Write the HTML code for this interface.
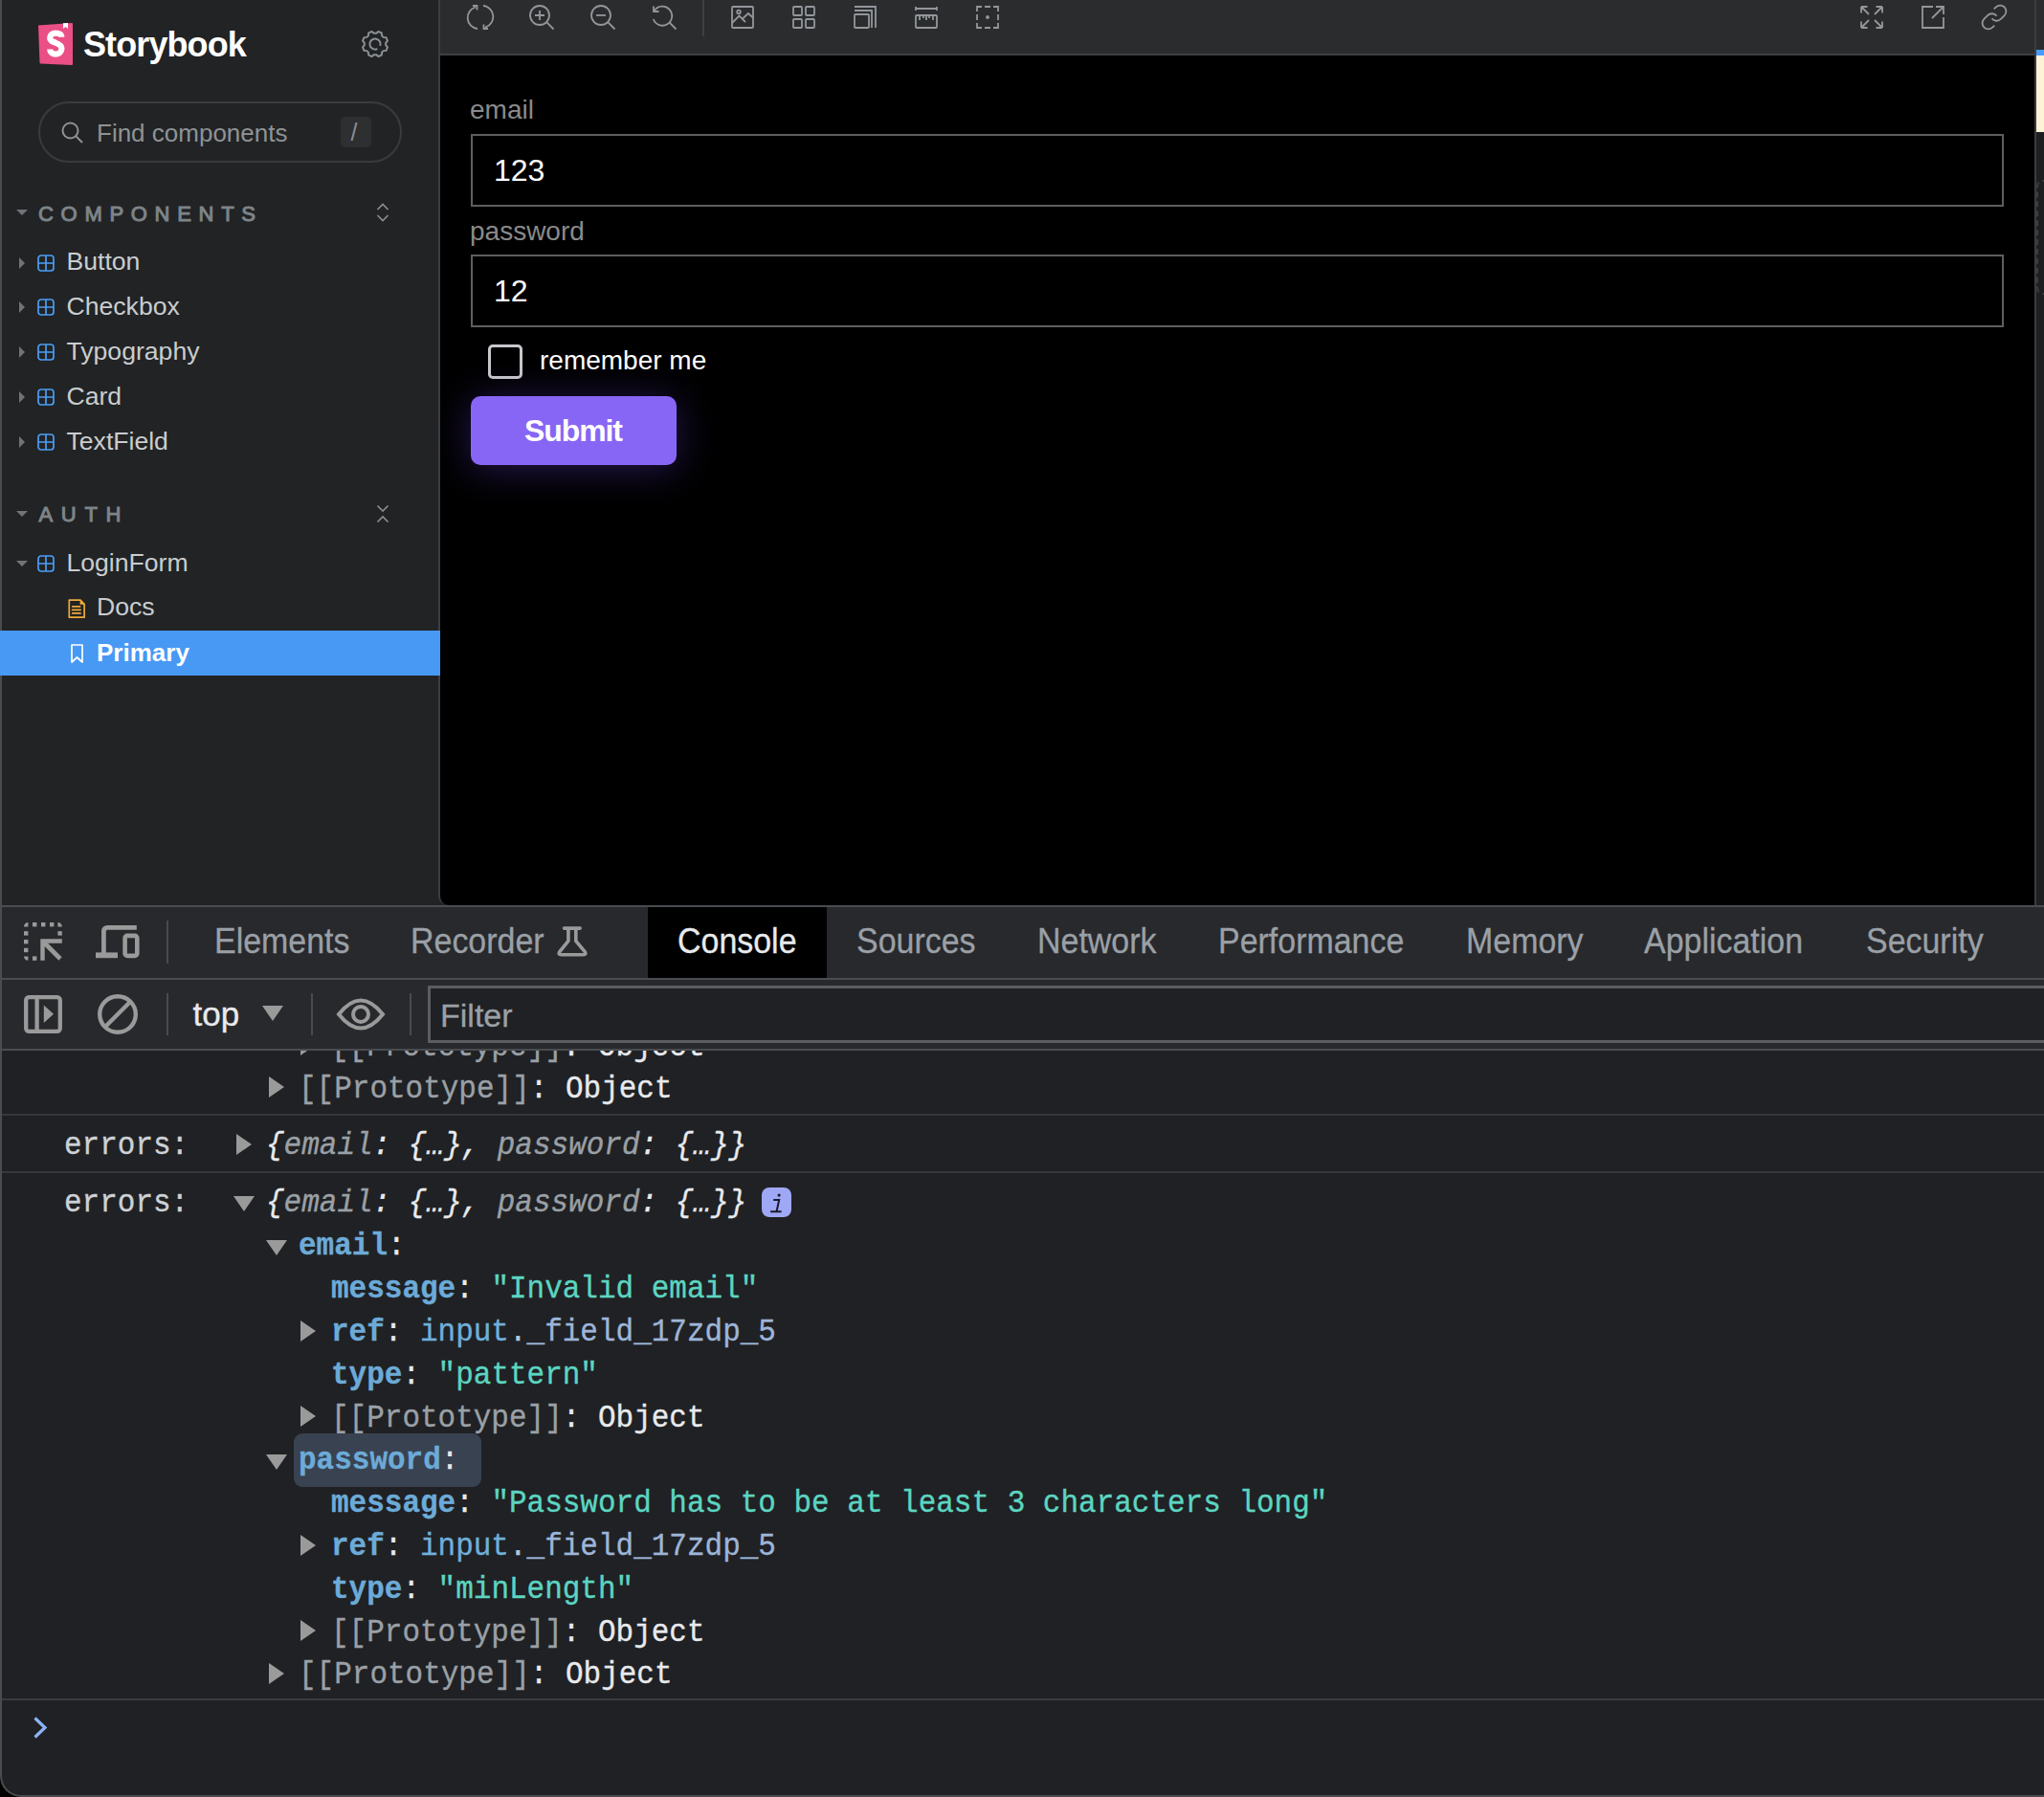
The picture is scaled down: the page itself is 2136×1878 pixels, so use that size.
<!DOCTYPE html>
<html><head><meta charset="utf-8">
<style>
*{box-sizing:border-box}
html,body{margin:0;padding:0}
body{width:2136px;height:1878px;background:#000;overflow:hidden;position:relative;font-family:"Liberation Sans",sans-serif}
.a{position:absolute}
#win{left:0;top:0;width:2136px;height:1878px;background:#222325;border-bottom-left-radius:22px;overflow:hidden}
#frame{left:0;top:-10px;width:2146px;height:1888px;border-left:2px solid #4a4c4f;border-bottom:2px solid #4a4c4f;border-bottom-left-radius:22px;pointer-events:none}
.t{position:absolute;white-space:nowrap;line-height:1}
.sb{color:#c9cdcf;font-size:26.6px}
.sec{color:#7d8589;font-size:22px;font-weight:normal;-webkit-text-stroke:1px currentColor;letter-spacing:7.7px}
svg{position:absolute;overflow:visible}
#pv{left:458px;top:0;width:1670px;height:946px;background:#000;border-left:2px solid #3b3d40;border-right:2px solid #3b3d40;border-bottom-left-radius:10px;overflow:hidden}
#tb{left:0;top:0;width:1666px;height:58px;background:#2b2c2e;border-bottom:2px solid #3d3f42}
#dt{left:0;top:946px;width:2136px;height:932px;background:#202124;border-top:2px solid #494c50}
.tab{color:#9aa0a6;font-size:36.5px;transform:scaleX(0.93);transform-origin:0 0;-webkit-text-stroke:0.3px currentColor}
.mono{-webkit-text-stroke:0.35px currentColor;font-family:"Liberation Mono",monospace;font-size:33.5px;transform:scaleX(0.925);transform-origin:0 0;color:#e8eaed;position:absolute;white-space:pre;line-height:1}
.k{color:#6cabd8;font-weight:bold}
.s{color:#5cd5c1}
.g{color:#9aa0a6}
.n{color:#9db5d8}
.n1{color:#6fb0dc}
.n2{color:#b5c8e0}
.i{font-style:italic}
</style></head>
<body>
<div id="win" class="a">


<svg style="left:38px;top:22px" width="40" height="48" viewBox="0 0 40 48">
  <path d="M2 4.4 L37 1.9 Q38 1.9 38 3 L38 45 Q38 46 37 46 L4.5 44.5 Q3.5 44.5 3.5 43.5 Z" fill="#ea4f86"/>
  <path d="M28 2.2 L28 8 L30.5 6 L33 8 L33 1.9 Z" fill="#fff"/>
</svg>

<svg style="left:38px;top:22px" width="40" height="48" viewBox="0 0 40 48"><path d="M26.3 16.8C26.3 14 23.8 12.6 20.3 12.6C16.8 12.6 14.2 14.6 14.2 17.6C14.2 20.6 17 21.6 20.3 22.8C23.6 24 26.4 25.2 26.4 28.8C26.4 32.2 23.6 34.6 20.3 34.6C17 34.6 14.2 32.6 14.2 29.6" fill="none" stroke="#fff" stroke-width="6.2"/></svg>
<div class="t" style="left:87px;top:28.8px;font-size:36px;font-weight:bold;color:#fff;letter-spacing:-0.9px">Storybook</div>
<svg style="left:378px;top:32px" width="28" height="28" viewBox="0 0 28 28"><path fill="none" stroke="#8a9095" stroke-width="2" stroke-linejoin="round" d="M25.15 15.07 L26.97 17.36 L25.55 20.80 L22.64 21.12 L21.12 22.64 L20.80 25.55 L17.36 26.97 L15.07 25.15 L12.93 25.15 L10.64 26.97 L7.20 25.55 L6.88 22.64 L5.36 21.12 L2.45 20.80 L1.03 17.36 L2.85 15.07 L2.85 12.93 L1.03 10.64 L2.45 7.20 L5.36 6.88 L6.88 5.36 L7.20 2.45 L10.64 1.03 L12.93 2.85 L15.07 2.85 L17.36 1.03 L20.80 2.45 L21.12 5.36 L22.64 6.88 L25.55 7.20 L26.97 10.64 L25.15 12.93Z"/><path fill="none" stroke="#8a9095" stroke-width="2" d="M16.37 19.08 A5.6 5.6 0 1 1 19.26 15.92"/></svg>
<div class="a" style="left:40px;top:106px;width:380px;height:64px;border:2px solid #393b3d;border-radius:32px"></div>
<svg style="left:64px;top:127px" width="23" height="23" viewBox="0 0 23 23"><circle cx="9.5" cy="9.5" r="8" fill="none" stroke="#8e9295" stroke-width="2"/><path d="M15.5 15.5L22 22" stroke="#8e9295" stroke-width="2"/></svg>
<div class="t sb" style="left:101px;top:125.5px;color:#8e9396;font-size:26px">Find components</div>
<div class="a" style="left:356px;top:122px;width:32px;height:32px;background:#2d2f31;border-radius:5px"></div>
<div class="t" style="left:366.5px;top:126.3px;font-size:25px;color:#8a8e91">/</div>
<svg style="left:17.0px;top:219.0px" width="12" height="6"><path d="M0 0H12L6 6Z" fill="#6f7478"/></svg>
<div class="t sec" style="left:40px;top:212.6px">COMPONENTS</div>
<svg style="left:393px;top:212px" width="14" height="20" viewBox="0 0 14 20"><path d="M1.5 7L7 1.5L12.5 7M1.5 13L7 18.5L12.5 13" fill="none" stroke="#8b8f92" stroke-width="1.6"/></svg>
<svg style="left:20.0px;top:268.5px" width="6" height="12"><path d="M0 0L6 6L0 12Z" fill="#6f7478"/></svg>
<svg style="left:39.0px;top:265.5px" width="18" height="18" viewBox="0 0 18 18"><rect x="1" y="1" width="16" height="16" rx="3" fill="none" stroke="#4a9ef5" stroke-width="1.7"/><path d="M9 1V17M1 9H17" stroke="#4a9ef5" stroke-width="1.7"/></svg>
<div class="t sb" style="left:69.5px;top:260.0px">Button</div>
<svg style="left:20.0px;top:315.4px" width="6" height="12"><path d="M0 0L6 6L0 12Z" fill="#6f7478"/></svg>
<svg style="left:39.0px;top:312.4px" width="18" height="18" viewBox="0 0 18 18"><rect x="1" y="1" width="16" height="16" rx="3" fill="none" stroke="#4a9ef5" stroke-width="1.7"/><path d="M9 1V17M1 9H17" stroke="#4a9ef5" stroke-width="1.7"/></svg>
<div class="t sb" style="left:69.5px;top:306.9px">Checkbox</div>
<svg style="left:20.0px;top:362.3px" width="6" height="12"><path d="M0 0L6 6L0 12Z" fill="#6f7478"/></svg>
<svg style="left:39.0px;top:359.3px" width="18" height="18" viewBox="0 0 18 18"><rect x="1" y="1" width="16" height="16" rx="3" fill="none" stroke="#4a9ef5" stroke-width="1.7"/><path d="M9 1V17M1 9H17" stroke="#4a9ef5" stroke-width="1.7"/></svg>
<div class="t sb" style="left:69.5px;top:353.8px">Typography</div>
<svg style="left:20.0px;top:409.2px" width="6" height="12"><path d="M0 0L6 6L0 12Z" fill="#6f7478"/></svg>
<svg style="left:39.0px;top:406.2px" width="18" height="18" viewBox="0 0 18 18"><rect x="1" y="1" width="16" height="16" rx="3" fill="none" stroke="#4a9ef5" stroke-width="1.7"/><path d="M9 1V17M1 9H17" stroke="#4a9ef5" stroke-width="1.7"/></svg>
<div class="t sb" style="left:69.5px;top:400.7px">Card</div>
<svg style="left:20.0px;top:456.1px" width="6" height="12"><path d="M0 0L6 6L0 12Z" fill="#6f7478"/></svg>
<svg style="left:39.0px;top:453.1px" width="18" height="18" viewBox="0 0 18 18"><rect x="1" y="1" width="16" height="16" rx="3" fill="none" stroke="#4a9ef5" stroke-width="1.7"/><path d="M9 1V17M1 9H17" stroke="#4a9ef5" stroke-width="1.7"/></svg>
<div class="t sb" style="left:69.5px;top:447.6px">TextField</div>
<svg style="left:17.0px;top:534.0px" width="12" height="6"><path d="M0 0H12L6 6Z" fill="#6f7478"/></svg>
<div class="t sec" style="left:40.5px;top:527.4px;letter-spacing:8.7px">AUTH</div>
<svg style="left:393px;top:527px" width="14" height="20" viewBox="0 0 14 20"><path d="M1.5 1.5L7 7L12.5 1.5M1.5 18.5L7 13L12.5 18.5" fill="none" stroke="#8b8f92" stroke-width="1.6"/></svg>
<svg style="left:17.0px;top:585.5px" width="12" height="6"><path d="M0 0H12L6 6Z" fill="#6f7478"/></svg>
<svg style="left:39.0px;top:580.0px" width="18" height="18" viewBox="0 0 18 18"><rect x="1" y="1" width="16" height="16" rx="3" fill="none" stroke="#4a9ef5" stroke-width="1.7"/><path d="M9 1V17M1 9H17" stroke="#4a9ef5" stroke-width="1.7"/></svg>
<div class="t sb" style="left:69.5px;top:574.5px">LoginForm</div>
<svg style="left:70px;top:625px" width="20" height="22" viewBox="0 0 20 22"><path d="M2.3 2.2H14L18.1 6.3V20.2H2.3Z" fill="none" stroke="#eeaa38" stroke-width="1.7" stroke-linejoin="round"/><path d="M13.6 1.5L18.8 6.7H13.6Z" fill="#eeaa38"/><path d="M5.8 8.8H13.6M5.6 12.4H14M5.8 15.9H14" stroke="#eeaa38" stroke-width="1.8" stroke-linecap="round"/></svg>
<div class="t sb" style="left:101px;top:621.3px">Docs</div>
<div class="a" style="left:0;top:659px;width:460px;height:47px;background:#4799f4;z-index:5"></div>
<svg style="z-index:6;left:74px;top:673px" width="13" height="20" viewBox="0 0 13 20"><path d="M1 1H12V19L6.5 14L1 19Z" fill="none" stroke="#fff" stroke-width="1.7" stroke-linejoin="round"/></svg>
<div class="t sb" style="left:101px;top:669.0px;color:#fff;font-weight:bold;z-index:6;font-size:26px">Primary</div>
<div id="pv" class="a">
<div id="tb" class="a"></div>
<svg style="left:28.0px;top:4.0px" width="28" height="28" viewBox="0 0 28 28" fill="none" stroke="#92979b" stroke-width="1.8"><path d="M11 26A11.5 11.5 0 0 1 9 3.5"/><path d="M17 2A11.5 11.5 0 0 1 19 24.5"/><path d="M6 2H10.5V6.5"/><path d="M22 26H17.5V21.5"/></svg>
<svg style="left:92.0px;top:4.0px" width="28" height="28" viewBox="0 0 28 28" fill="none" stroke="#92979b" stroke-width="1.8"><circle cx="12" cy="12" r="10"/><path d="M19.2 19.2L26.5 26.5"/><path d="M12 7V17M7 12H17"/></svg>
<svg style="left:156.0px;top:4.0px" width="28" height="28" viewBox="0 0 28 28" fill="none" stroke="#92979b" stroke-width="1.8"><circle cx="12" cy="12" r="10"/><path d="M19.2 19.2L26.5 26.5"/><path d="M7 12H17"/></svg>
<svg style="left:220.0px;top:4.0px" width="28" height="28" viewBox="0 0 28 28" fill="none" stroke="#92979b" stroke-width="1.8"><path d="M2.8 16A10 10 0 1 0 4 7"/><path d="M19.2 19.2L26.5 26.5"/><path d="M3 2.5V8H8.5"/></svg>
<div class="a" style="left:274px;top:0;width:2px;height:38px;background:#3e4043"></div>
<svg style="left:304.0px;top:6.0px" width="24" height="24" viewBox="0 0 24 24" fill="none" stroke="#92979b" stroke-width="1.8"><rect x="1" y="1" width="22" height="22" rx="1"/><circle cx="8" cy="6.5" r="1.8"/><path d="M1 18L8.5 10.5L15 17M12 13.5L18 8L23 12.5"/></svg>
<svg style="left:368.0px;top:6.0px" width="24" height="24" viewBox="0 0 24 24" fill="none" stroke="#92979b" stroke-width="1.8"><rect x="1" y="1" width="9" height="9" rx="1"/><rect x="14" y="1" width="9" height="9" rx="1"/><rect x="1" y="14" width="9" height="9" rx="1"/><rect x="14" y="14" width="9" height="9" rx="1"/></svg>
<svg style="left:432.0px;top:6.0px" width="24" height="24" viewBox="0 0 24 24" fill="none" stroke="#92979b" stroke-width="1.8"><rect x="1" y="9" width="15" height="14" rx="1"/><path d="M1 5H19V23"/><path d="M1 1H23V23"/></svg>
<svg style="left:496.0px;top:6.0px" width="24" height="24" viewBox="0 0 24 24" fill="none" stroke="#92979b" stroke-width="1.8"><path d="M1 1V5M23 1V5M1 3H23"/><rect x="1" y="10" width="22" height="13" rx="1"/><path d="M5 10V15M9 10V13M12 10V15M15 10V13M19 10V15"/></svg>
<svg style="left:560.0px;top:6.0px" width="24" height="24" viewBox="0 0 24 24" fill="none" stroke="#92979b" stroke-width="1.8"><path d="M1 6V1H6M9 1H15M18 1H23V6M23 9V15M23 18V23H18M15 23H9M6 23H1V18M1 15V9"/><circle cx="12" cy="12" r="1" fill="#92979b"/></svg>
<svg style="left:1484.0px;top:6.0px" width="24" height="24" viewBox="0 0 24 24" fill="none" stroke="#92979b" stroke-width="1.8"><path d="M1 1L9 9M1 1V7.5M1 1H7.5M23 1L15 9M23 1V7.5M23 1H16.5M1 23L9 15M1 23V16.5M1 23H7.5M23 23L15 15M23 23V16.5M23 23H16.5"/></svg>
<svg style="left:1548.0px;top:6.0px" width="24" height="24" viewBox="0 0 24 24" fill="none" stroke="#92979b" stroke-width="1.8"><path d="M12 1H1V23H23V12"/><path d="M11 13L23 1M15 1H23V9"/></svg>
<svg style="left:1611.0px;top:5.0px" width="26" height="26" viewBox="1.6 1.6 20.8 20.8" fill="none" stroke="#92979b" stroke-width="1.8"><g stroke-width="1.45"><path d="M10 13a5 5 0 0 0 7.54.54l3-3a5 5 0 0 0-7.07-7.07l-1.72 1.71"/><path d="M14 11a5 5 0 0 0-7.54-.54l-3 3a5 5 0 0 0 7.07 7.07l1.71-1.71"/></g></svg>
<div class="t" style="left:31.0px;top:101.1px;font-size:28px;color:#8a8a8a">email</div>
<div class="a" style="left:32px;top:140px;width:1602px;height:76px;border:2px solid #5e5e5e"></div>
<div class="t" style="left:56.0px;top:161.9px;font-size:32px;color:#fff">123</div>
<div class="t" style="left:31.0px;top:227.6px;font-size:28px;color:#8a8a8a">password</div>
<div class="a" style="left:32px;top:266px;width:1602px;height:76px;border:2px solid #5e5e5e"></div>
<div class="t" style="left:56.0px;top:287.9px;font-size:32px;color:#fff">12</div>
<div class="a" style="left:50px;top:360px;width:36px;height:36px;border:3.5px solid #c9c7cc;border-radius:5px"></div>
<div class="t" style="left:104.0px;top:363.3px;font-size:28px;color:#fff">remember me</div>
<div class="a" style="left:32px;top:414px;width:215px;height:72px;background:#8866f5;border-radius:10px;box-shadow:0 4px 40px rgba(110,70,230,0.35)"></div>
<div class="t" style="left:88.0px;top:434.1px;font-size:32px;color:#fff;font-weight:bold;letter-spacing:-1.1px">Submit</div>
</div>
<div class="a" style="left:2128px;top:0;width:8px;height:946px;background:#1e1f20"></div>
<div class="a" style="left:2128px;top:0;width:8px;height:52px;background:#2b2c2e"></div>
<div class="a" style="left:2128px;top:52px;width:8px;height:6px;background:#479dff"></div>
<div class="a" style="left:2128px;top:58px;width:8px;height:80px;background:#fdf3d8"></div>
<div class="a" style="left:2128px;top:188px;width:14px;height:120px;border:2.5px dashed #3c3d40;border-radius:9px"></div>
<div id="dt" class="a">
<div class="a" style="left:0;top:0;width:2136px;height:74px;background:#28292d"></div>
<div class="a" style="left:0;top:74px;width:2136px;height:2px;background:#494c50"></div>
<div class="a" style="left:0;top:76px;width:2136px;height:72px;background:#28292d"></div>
<div class="a" style="left:0;top:148px;width:2136px;height:2px;background:#494c50"></div>
<svg style="left:25.0px;top:16.0px" width="40" height="40" viewBox="0 0 40 40"><rect x="9" y="0" width="4.4" height="4.4" fill="#9a9a9a"/><rect x="18" y="0" width="4.4" height="4.4" fill="#9a9a9a"/><rect x="27" y="0" width="4.4" height="4.4" fill="#9a9a9a"/><rect x="0" y="9.2" width="4.4" height="4.4" fill="#9a9a9a"/><rect x="0" y="18" width="4.4" height="4.4" fill="#9a9a9a"/><rect x="0" y="26.8" width="4.4" height="4.4" fill="#9a9a9a"/><rect x="9" y="35.4" width="4.4" height="4.4" fill="#9a9a9a"/><rect x="35.4" y="9.2" width="4.4" height="4.4" fill="#9a9a9a"/><path d="M0 4.4A4.4 4.4 0 0 1 4.4 0V4.4Z M35.4 0A4.4 4.4 0 0 1 39.8 4.4H35.4Z M4.4 39.8A4.4 4.4 0 0 1 0 35.4H4.4Z" fill="#9a9a9a"/><path d="M17.3 17.3H39.8V21.7H21.7V39.8H17.3Z" fill="#9a9a9a"/><path d="M20 20L38 38" stroke="#9a9a9a" stroke-width="4.6"/></svg>
<svg style="left:100.0px;top:19.0px" width="46" height="35" viewBox="0 0 46 35"><path d="M8.4 31V6.5Q8.4 2.3 12.6 2.3H42.8" fill="none" stroke="#9a9a9a" stroke-width="4.7"/><rect x="0" y="28.4" width="23" height="5.8" fill="#9a9a9a"/><rect x="30.6" y="10.9" width="12.7" height="21" rx="2.5" fill="none" stroke="#9a9a9a" stroke-width="4.6"/></svg>
<div class="a" style="left:174px;top:14px;width:2px;height:45px;background:#4a4b4e"></div>
<div class="a" style="left:677px;top:0;width:187px;height:74px;background:#000"></div>
<div class="t tab" style="left:224.0px;top:18.1px;color:#9aa0a6">Elements</div>
<div class="t tab" style="left:429.0px;top:18.1px;color:#9aa0a6">Recorder</div>
<div class="t tab" style="left:708.0px;top:18.1px;color:#e8eaed">Console</div>
<div class="t tab" style="left:895.0px;top:18.1px;color:#9aa0a6">Sources</div>
<div class="t tab" style="left:1084.0px;top:18.1px;color:#9aa0a6">Network</div>
<div class="t tab" style="left:1273.0px;top:18.1px;color:#9aa0a6">Performance</div>
<div class="t tab" style="left:1532.0px;top:18.1px;color:#9aa0a6">Memory</div>
<div class="t tab" style="left:1718.0px;top:18.1px;color:#9aa0a6">Application</div>
<div class="t tab" style="left:1950.0px;top:18.1px;color:#9aa0a6">Security</div>
<svg style="left:582.0px;top:19.0px" width="32" height="33" viewBox="0 0 32 33"><path d="M7.5 3.1H24.2M11.9 3.1V16.4L2.8 27.6Q0.8 30.8 4.5 30.8H27.5Q31.2 30.8 29.2 27.6L19.8 16.4V3.1" fill="none" stroke="#9a9a9a" stroke-width="3.6" stroke-linecap="round" stroke-linejoin="round"/></svg>
<svg style="left:25.0px;top:92.0px" width="40" height="40" viewBox="0 0 40 40"><rect x="2.2" y="2.2" width="35.6" height="35.6" rx="3" fill="none" stroke="#9a9a9a" stroke-width="4.3"/><path d="M13.6 2V38" stroke="#9a9a9a" stroke-width="4.3"/><path d="M20.8 10.5L31 19.8L20.8 29Z" fill="#9a9a9a"/></svg>
<svg style="left:102.0px;top:91.0px" width="42" height="42" viewBox="0 0 42 42"><circle cx="21" cy="21" r="18.8" fill="none" stroke="#9a9a9a" stroke-width="4.4"/><path d="M34.5 7.5L7.5 34.5" stroke="#9a9a9a" stroke-width="4.4"/></svg>
<div class="a" style="left:174px;top:90px;width:2px;height:44px;background:#4a4b4e"></div>
<div class="t" style="left:201.5px;top:93.9px;font-size:35px;color:#e8eaed;-webkit-text-stroke:0.3px currentColor">top</div>
<svg style="left:274.0px;top:103.0px" width="22" height="16" viewBox="0 0 22 16"><path d="M0 0H22L11 16Z" fill="#9a9a9a"/></svg>
<div class="a" style="left:324.5px;top:90px;width:2px;height:44px;background:#4a4b4e"></div>
<svg style="left:352.0px;top:95.0px" width="50" height="34" viewBox="0 0 50 34"><path d="M2 17Q25 -12 48 17Q25 46 2 17Z" fill="none" stroke="#9a9a9a" stroke-width="4"/><circle cx="25" cy="17" r="8" fill="none" stroke="#9a9a9a" stroke-width="4"/></svg>
<div class="a" style="left:428px;top:90px;width:2px;height:44px;background:#4a4b4e"></div>
<div class="a" style="left:447px;top:82px;width:1700px;height:60px;background:#202124;border:3px solid #5c5d5f"></div>
<div class="t" style="left:460px;top:96.2px;font-size:34px;color:#9aa0a6;-webkit-text-stroke:0.3px currentColor">Filter</div>
<div class="a" style="left:0;top:150px;width:2136px;height:780px;overflow:hidden">
<svg style="left:314.0px;top:-16.7px" width="16" height="22" viewBox="0 0 16 22"><path d="M0 0L16 11L0 22Z" fill="#9a9a9a"/></svg>
<div class="mono" style="left:345.5px;top:-20.4px"><span class="g">[[Prototype]]</span>: Object</div>
<svg style="left:281.0px;top:27.0px" width="16" height="22" viewBox="0 0 16 22"><path d="M0 0L16 11L0 22Z" fill="#9a9a9a"/></svg>
<div class="mono" style="left:311.5px;top:24.4px"><span class="g">[[Prototype]]</span>: Object</div>
<div class="a" style="left:0;top:66px;width:2136px;height:2px;background:#37383b"></div>
<div class="mono" style="left:66.6px;top:83.3px"><span style="color:#cdd1d6">errors:</span></div>
<svg style="left:247.0px;top:86.7px" width="16" height="22" viewBox="0 0 16 22"><path d="M0 0L16 11L0 22Z" fill="#9a9a9a"/></svg>
<div class="mono" style="left:278.0px;top:83.3px"><span class="i">{<span class="g">email</span>: {…}, <span class="g">password</span>: {…}}</span></div>
<div class="a" style="left:0;top:126px;width:2136px;height:2px;background:#37383b"></div>
<div class="mono" style="left:66.6px;top:143.1px"><span style="color:#cdd1d6">errors:</span></div>
<svg style="left:244.0px;top:152.3px" width="22" height="16" viewBox="0 0 22 16"><path d="M0 0H22L11 16Z" fill="#9a9a9a"/></svg>
<div class="mono" style="left:278.0px;top:143.1px"><span class="i">{<span class="g">email</span>: {…}, <span class="g">password</span>: {…}}</span></div>
<div class="a" style="left:796px;top:143.0px;width:31px;height:31px;background:#9fa8f5;border-radius:8px"></div>
<svg style="left:796.0px;top:143.0px" width="31" height="31" viewBox="0 0 31 31"><circle cx="18.1" cy="8.1" r="1.6" fill="#1a1b2e"/><path d="M12.2 13H18.2L15.5 25.2M9.1 25.2H20.6" fill="none" stroke="#1a1b2e" stroke-width="2"/></svg>
<svg style="left:278.0px;top:198.1px" width="22" height="16" viewBox="0 0 22 16"><path d="M0 0H22L11 16Z" fill="#9a9a9a"/></svg>
<div class="mono" style="left:311.5px;top:188.4px"><span class="k">email</span>:</div>
<div class="mono" style="left:345.5px;top:233.2px"><span class="k">message</span>: <span class="s">"Invalid email"</span></div>
<svg style="left:314.0px;top:281.7px" width="16" height="22" viewBox="0 0 16 22"><path d="M0 0L16 11L0 22Z" fill="#9a9a9a"/></svg>
<div class="mono" style="left:345.5px;top:278.0px"><span class="k">ref</span>: <span class="n1">input</span><span class="n2">.</span><span class="n">_field_17zdp_5</span></div>
<div class="mono" style="left:345.5px;top:322.8px"><span class="k">type</span>: <span class="s">"pattern"</span></div>
<svg style="left:314.0px;top:371.3px" width="16" height="22" viewBox="0 0 16 22"><path d="M0 0L16 11L0 22Z" fill="#9a9a9a"/></svg>
<div class="mono" style="left:345.5px;top:367.6px"><span class="g">[[Prototype]]</span>: Object</div>
<div class="a" style="left:307px;top:399.5px;width:196px;height:56px;background:#394250;border-radius:9px"></div>
<svg style="left:278.0px;top:422.1px" width="22" height="16" viewBox="0 0 22 16"><path d="M0 0H22L11 16Z" fill="#9a9a9a"/></svg>
<div class="mono" style="left:311.5px;top:412.4px"><span class="k">password</span>:</div>
<div class="mono" style="left:345.5px;top:457.2px"><span class="k">message</span>: <span class="s">"Password has to be at least 3 characters long"</span></div>
<svg style="left:314.0px;top:505.7px" width="16" height="22" viewBox="0 0 16 22"><path d="M0 0L16 11L0 22Z" fill="#9a9a9a"/></svg>
<div class="mono" style="left:345.5px;top:502.0px"><span class="k">ref</span>: <span class="n1">input</span><span class="n2">.</span><span class="n">_field_17zdp_5</span></div>
<div class="mono" style="left:345.5px;top:546.8px"><span class="k">type</span>: <span class="s">"minLength"</span></div>
<svg style="left:314.0px;top:595.3px" width="16" height="22" viewBox="0 0 16 22"><path d="M0 0L16 11L0 22Z" fill="#9a9a9a"/></svg>
<div class="mono" style="left:345.5px;top:591.6px"><span class="g">[[Prototype]]</span>: Object</div>
<svg style="left:281.0px;top:640.1px" width="16" height="22" viewBox="0 0 16 22"><path d="M0 0L16 11L0 22Z" fill="#9a9a9a"/></svg>
<div class="mono" style="left:311.5px;top:636.4px"><span class="g">[[Prototype]]</span>: Object</div>
<div class="a" style="left:0;top:677px;width:2136px;height:2px;background:#3c3c3c"></div>
<svg style="left:35.0px;top:696.0px" width="15" height="23" viewBox="0 0 15 23"><path d="M1.5 1.5L12 11.5L1.5 21.5" fill="none" stroke="#8ab4f8" stroke-width="3.2"/></svg>
</div>
</div>
<div id="frame" class="a"></div>
</div></body></html>
